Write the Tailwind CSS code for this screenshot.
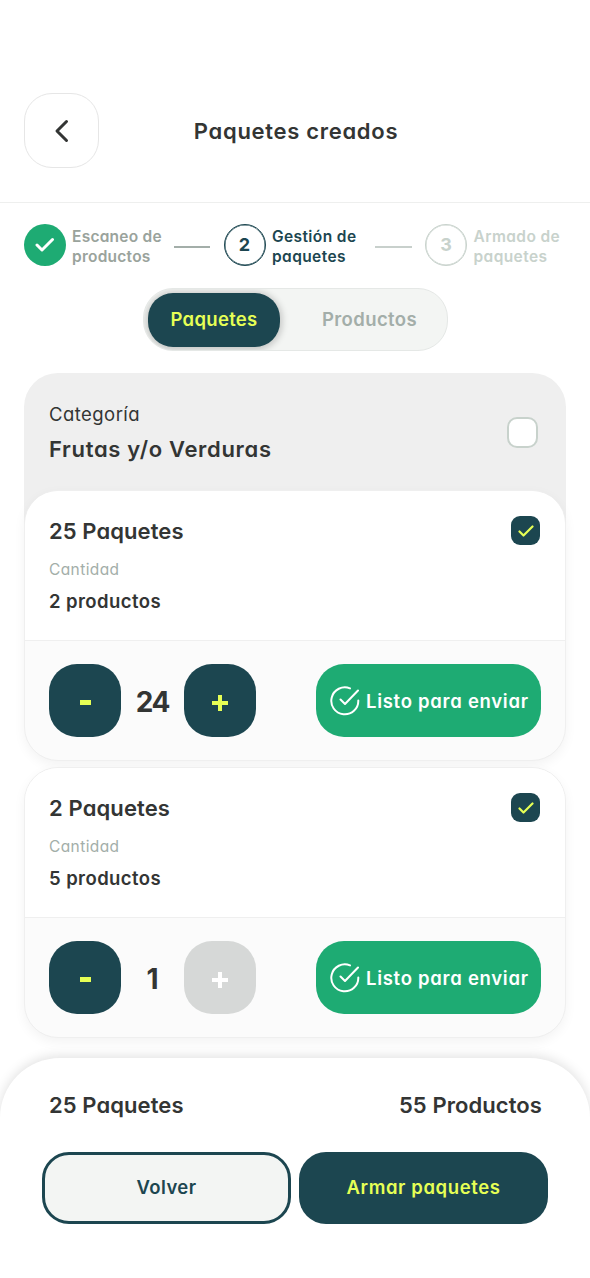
<!DOCTYPE html>
<html lang="es">
<head>
<meta charset="utf-8">
<title>Paquetes creados</title>
<script src="https://cdn.jsdelivr.net/npm/@tailwindcss/browser@4"></script>
</head>
<body class="w-[590px] h-[1278px] overflow-hidden bg-white flex flex-col whitespace-nowrap text-[#333534] font-semibold font-[Inter,'Noto_Sans',sans-serif] [font-feature-settings:'cv11','ss03']">

<header class="h-[203px] shrink-0 border-b-[1.5px] border-[#eeefee] px-6 pt-[93px] grid grid-cols-[75px_1fr_75px] items-start">
  <button class="size-[75px] rounded-[28px] border-[1.5px] border-[#e6e6e6] flex items-center justify-center">
    <svg class="w-4 h-6" viewBox="0 0 16 24" fill="none" stroke="#333534" stroke-width="3" stroke-linecap="round" stroke-linejoin="round"><path d="M12.500 2.500 3 12l9.500 9.500"/></svg>
  </button>
  <h1 class="pl-[2px] text-center leading-[77px] text-[22px] tracking-[0.7px]">Paquetes creados</h1>
</header>

<nav class="h-[63px] shrink-0 pl-6 pt-[21px] flex items-start text-[15.500px] leading-[19.500px]">
  <div class="flex w-[150px] gap-[6px]">
    <span class="size-[42px] shrink-0 rounded-full bg-[#1eab73] flex items-center justify-center">
      <svg class="w-5 h-4" viewBox="0 0 20 16" fill="none" stroke="#fff" stroke-width="3" stroke-linecap="round" stroke-linejoin="round"><path d="M2 8l5 5L17.500 2.500"/></svg>
    </span>
    <p class="pt-[3px] text-[#9aa39c] tracking-[0.25px]">Escaneo de<br>productos</p>
  </div>
  <span class="w-[36px] h-[1.5px] mt-[22px] bg-[#a3aea9]"></span>
  <div class="flex w-[151px] ml-[13.500px] gap-[6.500px] text-[#1c4650]">
    <span class="size-[42px] shrink-0 rounded-full border border-[#1c4650] shadow-[inset_0_0_0_0.5px_#1c4650] flex items-center justify-center text-[18px] font-bold">2</span>
    <p class="pt-[3px] tracking-[0.4px]">Gestión de<br>paquetes</p>
  </div>
  <span class="w-[37px] h-[1.5px] mt-[22px] bg-[#c8d0cc]"></span>
  <div class="flex ml-[13.500px] gap-[6.500px] text-[#c8d2cc]">
    <span class="size-[42px] shrink-0 rounded-full border border-[#c8d2cc] shadow-[inset_0_0_0_0.5px_#c8d2cc] flex items-center justify-center text-[18px] font-bold">3</span>
    <p class="pt-[3px] tracking-[0.4px]">Armado de<br>paquetes</p>
  </div>
</nav>

<div class="mt-[22px] ml-[143px] w-[305px] h-[63px] shrink-0 rounded-[30px] border border-[#e5e8e6] bg-[#f3f5f3] flex items-center pl-1 overflow-hidden text-[18.500px]">
  <button class="w-[132px] h-[54px] rounded-[25px] bg-[#1c4650] text-[#e6ff55] shadow-[0_1px_7px_2px_rgba(0,0,0,0.2)] tracking-[0.3px]">Paquetes</button>
  <button class="flex-1 pl-3 text-[#a3aea9] tracking-[0.4px]">Productos</button>
</div>

<main class="mt-[22px] mx-6 h-[665px] shrink-0">
  <section class="h-[180px] rounded-t-[34px] bg-[#efefef] pl-[25px] pr-[28px] pt-[30px] flex justify-between items-start">
    <div>
      <p class="text-[18.500px] leading-[22px] font-normal tracking-[0.45px]">Categoría</p>
      <h2 class="mt-[11px] text-[22px] leading-[26px] tracking-[0.68px]">Frutas y/o Verduras</h2>
    </div>
    <span class="mt-[14px] size-[31px] rounded-[10px] border-2 border-[#c8d2cc] bg-white"></span>
  </section>

  <article class="-mt-[63px] h-[271px] rounded-[34px] border border-[#efefef] bg-[#fbfbfb] bg-clip-padding shadow-[0_4px_12px_rgba(0,0,0,0.05)] overflow-hidden">
    <div class="h-[150px] border-b border-[#efefef] bg-white px-6 pt-[25px] flex justify-between items-start">
      <div>
        <h3 class="text-[22px] leading-[30px] tracking-[0.08px]">25 Paquetes</h3>
        <p class="mt-[14px] text-[15.500px] leading-[20px] font-normal text-[#a3aea9] tracking-[0.4px]">Cantidad</p>
        <p class="mt-[9px] text-[18.500px] leading-[24px] tracking-[0.42px]">2 productos</p>
      </div>
      <span class="mr-[1px] size-[29px] rounded-[9px] bg-[#1c4650] flex items-center justify-center">
        <svg class="w-4 h-3" viewBox="0 0 16 12" fill="none" stroke="#e6ff55" stroke-width="2.200" stroke-linecap="round" stroke-linejoin="round"><path d="M1.500 6.500l4 4L14.500 1.500"/></svg>
      </span>
    </div>
    <div class="px-6 pt-[23px] flex items-center">
      <button class="w-[72px] h-[73px] rounded-[28px] bg-[#1c4650] flex items-center justify-center"><span class="mt-[4px] w-[11px] h-[5px] bg-[#e6ff55]"></span></button>
      <span class="w-[63px] pt-[2px] text-center text-[28px] font-bold tracking-[-1.2px]">24</span>
      <button class="w-[72px] h-[73px] rounded-[28px] bg-[#1c4650] flex items-center justify-center">
        <svg class="size-4 mt-1" viewBox="0 0 16 16" stroke="#e6ff55" stroke-width="4"><path d="M8 0v16M0 8h16"/></svg>
      </button>
      <button class="ml-auto w-[225px] h-[73px] rounded-[28px] bg-[#1eab73] text-white flex items-center pl-[14px] gap-[6px] text-[18.500px] tracking-[0.72px]">
        <svg class="size-[30px] shrink-0" viewBox="0 0 30 30" fill="none" stroke="#fff" stroke-width="2" stroke-linecap="round" stroke-linejoin="round"><path d="M20 2.400A13.500 13.500 0 1 0 28.300 14.500M10.500 13.500l4.500 4.500L28 4.500"/></svg>
        <span class="pt-[2px]">Listo para enviar</span>
      </button>
    </div>
  </article>

  <article class="mt-[6px] h-[271px] rounded-[34px] border border-[#efefef] bg-[#fbfbfb] bg-clip-padding shadow-[0_4px_12px_rgba(0,0,0,0.05)] overflow-hidden">
    <div class="h-[150px] border-b border-[#efefef] bg-white px-6 pt-[25px] flex justify-between items-start">
      <div>
        <h3 class="text-[22px] leading-[30px] tracking-[0.12px]">2 Paquetes</h3>
        <p class="mt-[14px] text-[15.500px] leading-[20px] font-normal text-[#a3aea9] tracking-[0.4px]">Cantidad</p>
        <p class="mt-[9px] text-[18.500px] leading-[24px] tracking-[0.42px]">5 productos</p>
      </div>
      <span class="mr-[1px] size-[29px] rounded-[9px] bg-[#1c4650] flex items-center justify-center">
        <svg class="w-4 h-3" viewBox="0 0 16 12" fill="none" stroke="#e6ff55" stroke-width="2.200" stroke-linecap="round" stroke-linejoin="round"><path d="M1.500 6.500l4 4L14.500 1.500"/></svg>
      </span>
    </div>
    <div class="px-6 pt-[23px] flex items-center">
      <button class="w-[72px] h-[73px] rounded-[28px] bg-[#1c4650] flex items-center justify-center"><span class="mt-[4px] w-[11px] h-[5px] bg-[#e6ff55]"></span></button>
      <span class="w-[63px] pt-[2px] text-center text-[28px] font-bold">1</span>
      <button class="w-[72px] h-[73px] rounded-[28px] bg-[#d6d8d7] flex items-center justify-center">
        <svg class="size-4 mt-1" viewBox="0 0 16 16" stroke="#fff" stroke-width="4"><path d="M8 0v16M0 8h16"/></svg>
      </button>
      <button class="ml-auto w-[225px] h-[73px] rounded-[28px] bg-[#1eab73] text-white flex items-center pl-[14px] gap-[6px] text-[18.500px] tracking-[0.72px]">
        <svg class="size-[30px] shrink-0" viewBox="0 0 30 30" fill="none" stroke="#fff" stroke-width="2" stroke-linecap="round" stroke-linejoin="round"><path d="M20 2.400A13.500 13.500 0 1 0 28.300 14.500M10.500 13.500l4.500 4.500L28 4.500"/></svg>
        <span class="pt-[2px]">Listo para enviar</span>
      </button>
    </div>
  </article>
</main>

<footer class="mt-[20px] h-[220px] shrink-0 rounded-t-[60px] bg-white shadow-[0_-2px_12px_rgba(0,0,0,0.12)]">
  <div class="pl-[49px] pr-[48px] pt-[32px] flex justify-between text-[22px] leading-[30px] tracking-[0.08px]">
    <span>25 Paquetes</span>
    <span>55 Productos</span>
  </div>
  <div class="mt-[32px] px-[42px] grid grid-cols-2 gap-2 text-[18.500px]">
    <button class="h-[72px] rounded-[27px] border-[3px] border-[#1c4650] bg-[#f3f5f3] text-[#1c4650] tracking-[0.4px]">Volver</button>
    <button class="h-[72px] rounded-[27px] bg-[#1c4650] text-[#e6ff55] tracking-[0.6px]">Armar paquetes</button>
  </div>
</footer>
</body>
</html>
